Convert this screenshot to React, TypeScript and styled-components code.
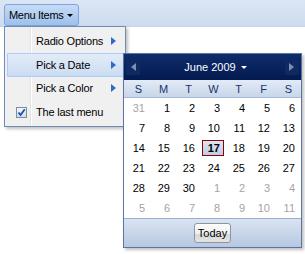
import React, { FC } from 'react';
import styled, { createGlobalStyle } from 'styled-components';

const GlobalStyle = createGlobalStyle`
  html, body {
    margin: 0;
    padding: 0;
    background: #fff;
  }
  body {
    font-family: 'Liberation Sans', Arial, sans-serif;
    font-size: 11px;
  }
`;

const Page = styled.div`
  position: relative;
  width: 305px;
  height: 254px;
  overflow: hidden;
  background: #fff;
`;

const Toolbar = styled.div`
  height: 27px;
  box-sizing: border-box;
  padding: 4px 4px 0;
  display: flex;
  align-items: flex-start;
  background: linear-gradient(#dbe6f5, #cddbee);
  border-bottom: 1px solid #c4d4ea;
`;

const MenuButton = styled.div`
  height: 22px;
  box-sizing: border-box;
  padding: 0 5px 0 4px;
  display: flex;
  align-items: center;
  gap: 4px;
  border: 1px solid #7fa6dc;
  border-radius: 3px;
  background: linear-gradient(#c6dbf6, #9ec0ec);
  color: #000;
  font-size: 11px;
  letter-spacing: -0.3px;
`;

const Caret = styled.span`
  width: 0;
  height: 0;
  border-left: 3px solid transparent;
  border-right: 3px solid transparent;
  border-top: 3px solid ${(p: { light?: boolean }) => (p.light ? '#fff' : '#000')};
`;

const Menu = styled.div`
  position: absolute;
  left: 4px;
  top: 26px;
  width: 122px;
  height: 101px;
  box-sizing: border-box;
  padding: 2px 0;
  border: 1px solid #718bb7;
  background: linear-gradient(
    to right,
    #f0f0f0 0 25px,
    #e2e3e3 25px 26px,
    #fff 26px 27px,
    #f0f0f0 27px
  );
  box-shadow: 2px 2px 3px rgba(0, 0, 0, 0.25);
  display: flex;
  flex-direction: column;
`;

const Item = styled.div<{ active?: boolean }>`
  height: 24px;
  box-sizing: border-box;
  margin: 0 1px 0 2px;
  display: flex;
  align-items: center;
  border: 1px solid ${(p) => (p.active ? '#aaccf6' : 'transparent')};
  background: ${(p) => (p.active ? 'linear-gradient(#e3ecf8, #cbdcf2)' : 'transparent')};
  border-radius: 1px;
`;

const IconCell = styled.div`
  width: 26px;
  flex: none;
  display: flex;
  justify-content: center;
`;

const Label = styled.span`
  flex: 1;
  padding-left: 2px;
  font-size: 11px;
  letter-spacing: -0.2px;
  color: #000;
`;

const Arrow = styled.span`
  width: 0;
  height: 0;
  margin-right: 7px;
  border-top: 4px solid transparent;
  border-bottom: 4px solid transparent;
  border-left: 5px solid #2d6bc6;
`;

const Check = styled.span`
  width: 11px;
  height: 11px;
  box-sizing: border-box;
  border: 1px solid #7b8ca3;
  background: linear-gradient(#f4f6f9, #d6dde8);
  display: flex;
  align-items: center;
  justify-content: center;
`;

const Calendar = styled.div`
  position: absolute;
  left: 123px;
  top: 53px;
  width: 179px;
  height: 195px;
  box-sizing: border-box;
  border: 1px solid #5a74a5;
  background: #fff;
  box-shadow: 2px 2px 3px rgba(0, 0, 0, 0.25);
  display: flex;
  flex-direction: column;
`;

const CalHeader = styled.div`
  height: 26px;
  flex: none;
  display: flex;
  align-items: center;
  justify-content: space-between;
  padding: 0 2px;
  background: linear-gradient(#0d2d6c, #041a4f);
`;

const NavBox = styled.div`
  width: 14px;
  height: 16px;
  display: flex;
  align-items: center;
  justify-content: center;
  background: #0f2a62;
`;

const NavArrow = styled.span<{ dir: 'left' | 'right' }>`
  width: 0;
  height: 0;
  border-top: 4px solid transparent;
  border-bottom: 4px solid transparent;
  ${(p) => (p.dir === 'left' ? 'border-right: 5px solid #7d90b3;' : 'border-left: 5px solid #7d90b3;')}
`;

const MonthTitle = styled.div`
  display: flex;
  align-items: center;
  gap: 5px;
  color: #fff;
  font-size: 11px;
  margin-left: 6px;
`;

const DayNames = styled.div`
  height: 18px;
  flex: none;
  box-sizing: border-box;
  display: grid;
  grid-template-columns: repeat(7, 25px);
  padding: 0 2px;
  align-items: center;
  background: linear-gradient(#e3ebf6, #c7d6ea);
  border-bottom: 1px solid #a3bad9;
  color: #1b326a;
  font-size: 11px;
  text-align: center;
`;

const Grid = styled.div`
  height: 120px;
  flex: none;
  display: grid;
  grid-template-columns: repeat(7, 25px);
  grid-auto-rows: 20px;
  padding: 0 1px;
`;

const Day = styled.div<{ muted?: boolean; selected?: boolean }>`
  display: flex;
  align-items: center;
  justify-content: flex-end;
  font-size: 11px;
  color: ${(p) => (p.muted ? '#a8a2a2' : '#000')};
  font-weight: ${(p) => (p.selected ? 'bold' : 'normal')};
  padding-right: ${(p) => (p.selected ? '0' : '5px')};
`;

const SelectedBox = styled.span`
  width: 22px;
  height: 16px;
  box-sizing: border-box;
  border: 1px solid #8b0000;
  background: linear-gradient(#dbe5f3, #bccde6);
  display: flex;
  align-items: center;
  justify-content: flex-end;
  padding-right: 3px;
  margin-right: 1px;
`;

const Footer = styled.div`
  flex: 1;
  display: flex;
  align-items: center;
  justify-content: center;
  border-top: 1px solid #99aed0;
  background: linear-gradient(#dae4f2, #b6c8e0);
`;

const TodayButton = styled.div`
  height: 20px;
  box-sizing: border-box;
  padding: 0 3px;
  display: flex;
  align-items: center;
  border: 1px solid #8f959c;
  border-radius: 3px;
  background: linear-gradient(#fdfdfd 0%, #f0f0f0 55%, #d6d6d6 56%, #e4e4e4 100%);
  font-size: 11px;
  color: #000;
`;

const days: { n: number; muted?: boolean }[] = [
  { n: 31, muted: true },
  ...Array.from({ length: 30 }, (_, i) => ({ n: i + 1 })),
  ...Array.from({ length: 11 }, (_, i) => ({ n: i + 1, muted: true })),
];

const menuItems = [
  { label: 'Radio Options', arrow: true },
  { label: 'Pick a Date', arrow: true, active: true },
  { label: 'Pick a Color', arrow: true },
  { label: 'The last menu', check: true },
];

const App: FC = () => (
  <Page>
    <GlobalStyle />
    <Toolbar>
      <MenuButton>
        Menu Items <Caret />
      </MenuButton>
    </Toolbar>
    <Menu>
      {menuItems.map((m) => (
        <Item key={m.label} active={m.active}>
          <IconCell>
            {m.check && (
              <Check>
                <svg width="9" height="9" viewBox="0 0 9 9">
                  <path d="M1.5 4.5 L3.5 7 L7.8 1.2" stroke="#1c4fa8" strokeWidth="1.8" fill="none" />
                </svg>
              </Check>
            )}
          </IconCell>
          <Label>{m.label}</Label>
          {m.arrow && <Arrow />}
        </Item>
      ))}
    </Menu>
    <Calendar>
      <CalHeader>
        <NavBox>
          <NavArrow dir="left" />
        </NavBox>
        <MonthTitle>
          June 2009 <Caret light />
        </MonthTitle>
        <NavBox>
          <NavArrow dir="right" />
        </NavBox>
      </CalHeader>
      <DayNames>
        {['S', 'M', 'T', 'W', 'T', 'F', 'S'].map((d, i) => (
          <span key={i}>{d}</span>
        ))}
      </DayNames>
      <Grid>
        {days.map((d, i) => (
          <Day key={i} muted={d.muted} selected={!d.muted && d.n === 17}>
            {!d.muted && d.n === 17 ? <SelectedBox>17</SelectedBox> : d.n}
          </Day>
        ))}
      </Grid>
      <Footer>
        <TodayButton>Today</TodayButton>
      </Footer>
    </Calendar>
  </Page>
);

export default App;
